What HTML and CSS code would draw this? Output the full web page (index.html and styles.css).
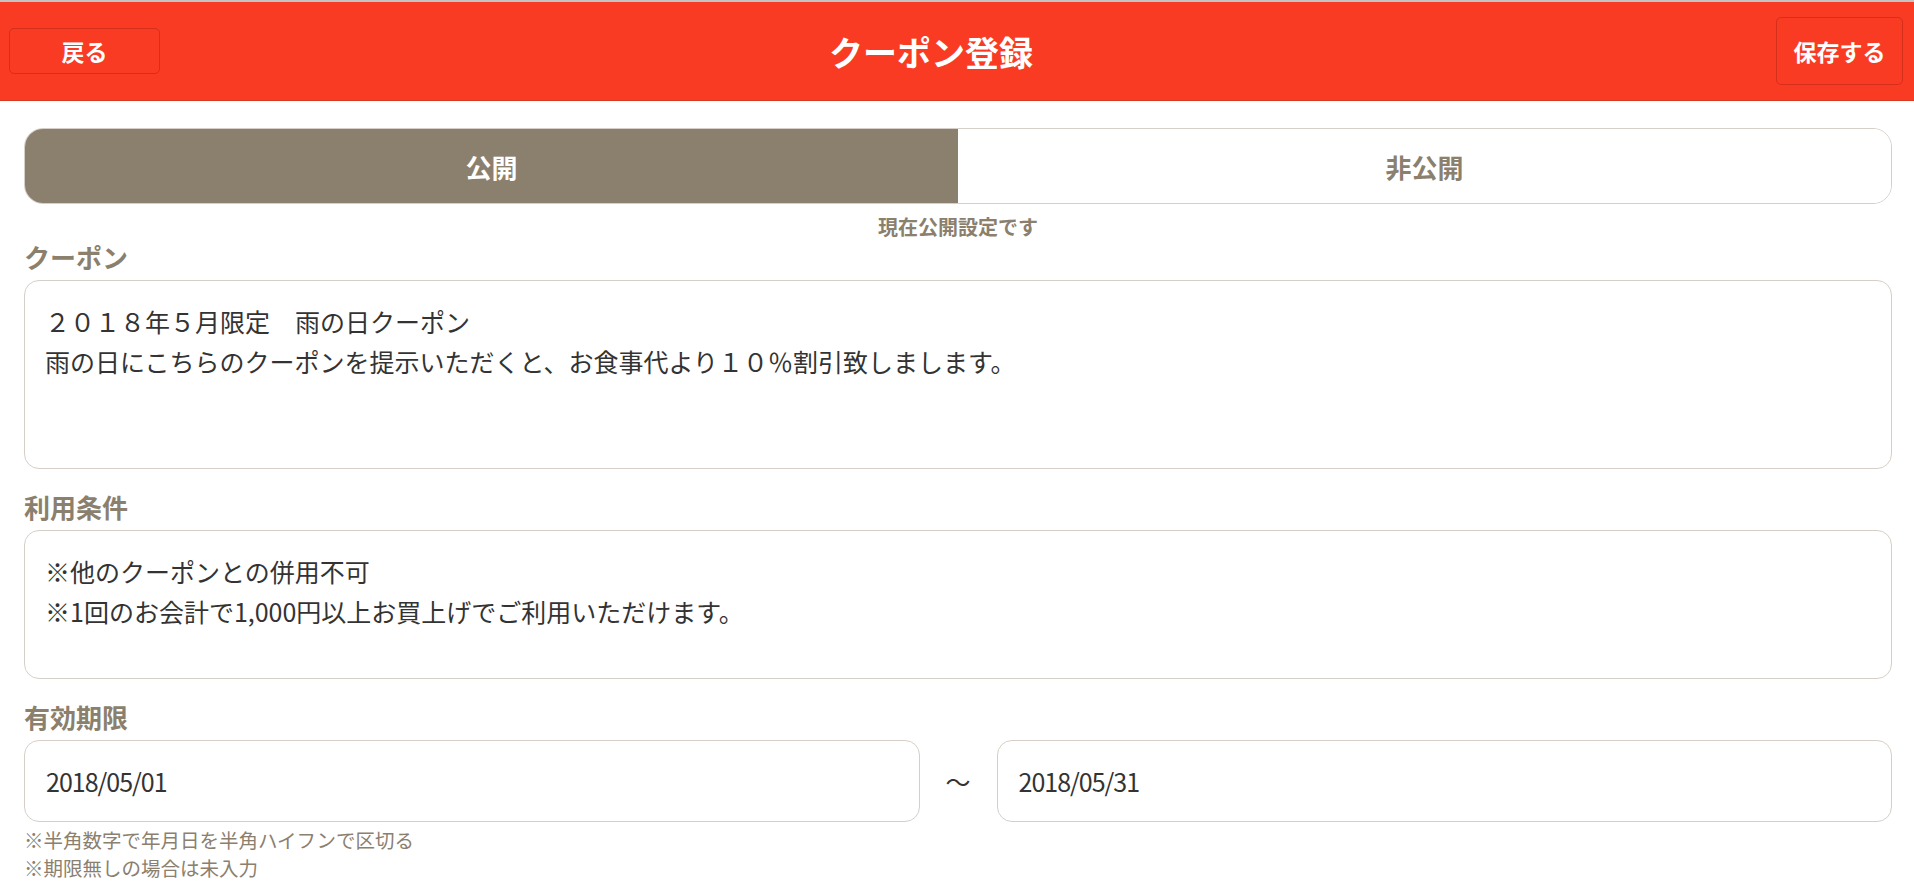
FILE: index.html
```html
<!DOCTYPE html>
<html lang="ja">
<head>
  <meta charset="UTF-8">
  <title>クーポン登録</title>
  <link rel="stylesheet" href="styles.css">
</head>
<body>

  <!-- Top bar -->
  <header class="topbar">
    <button class="btn-back">戻る</button>
    <h1 class="title">クーポン登録</h1>
    <button class="btn-save">保存する</button>
  </header>

  <main class="form">
    <!-- Public / private switch -->
    <div class="toggle">
      <button class="toggle-item active">公開</button>
      <button class="toggle-item">非公開</button>
    </div>
    <p class="status">現在公開設定です</p>

    <div class="field">
      <label class="field-label" for="coupon">クーポン</label>
      <textarea id="coupon" class="textbox textbox-lg">２０１８年５月限定　雨の日クーポン
雨の日にこちらのクーポンを提示いただくと、お食事代より１０％割引致しまします。</textarea>
    </div>

    <div class="field">
      <label class="field-label" for="terms">利用条件</label>
      <textarea id="terms" class="textbox textbox-md">※他のクーポンとの併用不可
※1回のお会計で1,000円以上お買上げでご利用いただけます。</textarea>
    </div>

    <div class="field">
      <label class="field-label" for="dateFrom">有効期限</label>
      <div class="date-row">
        <input type="text" id="dateFrom" class="date-input" value="2018/05/01">
        <span class="date-sep">〜</span>
        <input type="text" id="dateTo" class="date-input" value="2018/05/31">
      </div>
      <div class="notes">
        <p class="note">※半角数字で年月日を半角ハイフンで区切る</p>
        <p class="note">※期限無しの場合は未入力</p>
      </div>
    </div>
  </main>

</body>
</html>
```

FILE: styles.css
```css
/* Base */
body {
  margin: 0;
  border-top: 2px solid #c4c4c4;
  font-family: "Noto Sans CJK JP", "Noto Sans", sans-serif;
  background: #fff;
  color: #333;
}
button {
  font-family: inherit;
  cursor: pointer;
}

/* Top bar */
.topbar {
  display: flex;
  align-items: center;
  height: 98px;
  background: #f93b24;
  border-bottom: 1px solid #d8381f;
}
.title {
  flex: 1;
  margin: 0;
  padding-right: 74px;
  text-align: center;
  color: #fff;
  font-size: 34px;
  font-weight: bold;
}
.btn-back,
.btn-save {
  background: transparent;
  border: 1px solid rgba(130, 20, 10, 0.3);
  border-radius: 5px;
  color: #fff;
  font-size: 23px;
  font-weight: bold;
  padding: 0;
}
.btn-back {
  width: 151px;
  height: 46px;
  margin-left: 9px;
}
.btn-save {
  width: 127px;
  height: 68px;
  margin-right: 11px;
}

/* Form */
.form {
  padding: 27px 22px 0 24px;
}
.toggle {
  display: flex;
  height: 76px;
  border: 1px solid #d6cfc7;
  border-radius: 19px;
  overflow: hidden;
  box-sizing: border-box;
}
.toggle-item {
  flex: 1;
  border: none;
  background: #fff;
  color: #8b7f6d;
  font-size: 26px;
  font-weight: bold;
}
.toggle-item.active {
  background: #8b7f6d;
  color: #fff;
}
.status {
  margin: 10px 0 2px;
  text-align: center;
  font-size: 20px;
  line-height: 26px;
  font-weight: bold;
  color: #8b7f6d;
}
.field + .field {
  margin-top: 23px;
}
.field-label {
  display: block;
  margin-bottom: 8px;
  font-size: 26px;
  line-height: 30px;
  font-weight: bold;
  color: #8b7f6d;
}
.textbox {
  display: block;
  width: 100%;
  box-sizing: border-box;
  margin: 0;
  padding: 20px;
  border: 1px solid #d6cfc7;
  border-radius: 15px;
  font-family: inherit;
  font-size: 25px;
  line-height: 40px;
  color: #333;
  resize: none;
  overflow: hidden;
}
.textbox-lg {
  height: 189px;
}
.textbox-md {
  height: 149px;
}

/* Dates */
.date-row {
  display: flex;
  align-items: center;
}
.date-input {
  flex: 1;
  min-width: 0;
  height: 82px;
  box-sizing: border-box;
  margin: 0;
  padding: 0 21px;
  border: 1px solid #d6cfc7;
  border-radius: 15px;
  font-family: inherit;
  font-size: 25px;
  letter-spacing: -1px;
  color: #333;
}
.date-sep {
  width: 77px;
  text-align: center;
  font-size: 25px;
  color: #333;
}
.notes {
  margin-top: 4px;
}
.note {
  margin: 0;
  font-size: 19.5px;
  line-height: 28px;
  color: #8b8070;
}
```
